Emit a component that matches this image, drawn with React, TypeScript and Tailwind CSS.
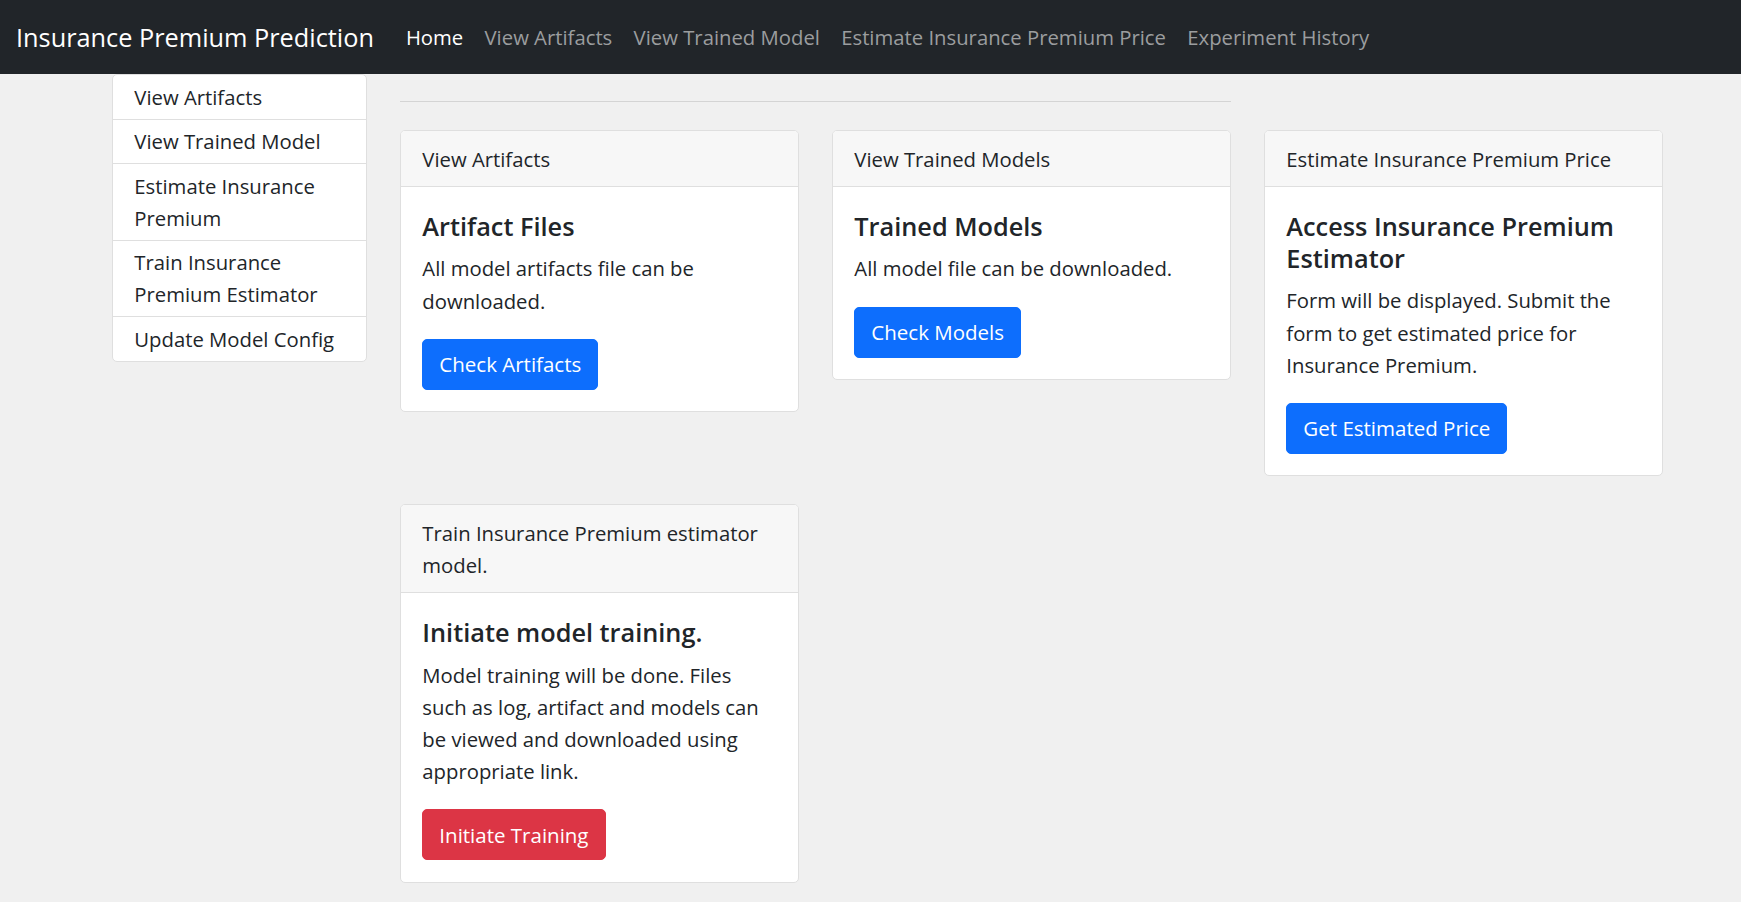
import React from "react";

const navLinks = [
  "Home",
  "View Artifacts",
  "View Trained Model",
  "Estimate Insurance Premium Price",
  "Experiment History",
];

const sideLinks = [
  "View Artifacts",
  "View Trained Model",
  "Estimate Insurance Premium",
  "Train Insurance Premium Estimator",
  "Update Model Config",
];

type CardProps = {
  header: string;
  title: string;
  text: string;
  button: string;
  danger?: boolean;
};

function Card({ header, title, text, button, danger }: CardProps) {
  return (
    <div className="bg-white border border-[#dfdfdf] rounded-[5px] overflow-hidden">
      <div className="bg-[#f7f7f7] border-b border-[#dfdfdf] px-[21.33px] py-[11.6px]">
        {header}
      </div>
      <div className="px-[21.33px] pt-[22.5px] pb-[21.33px]">
        <h5 className="text-[25.3px] leading-[32px] font-semibold mb-[10.67px]">{title}</h5>
        <p className="mb-[22px] leading-[32.2px]">{text}</p>
        <button
          className={
            danger
              ? "bg-[#dc3545] border border-[#dc3545] text-white rounded-[5px] px-[16px] py-[8.5px] leading-[32px] text-[20.5px]"
              : "bg-[#0d6efd] border border-[#0d6efd] text-white rounded-[5px] px-[16px] py-[8.5px] leading-[32px] text-[20.5px]"
          }
        >
          {button}
        </button>
      </div>
    </div>
  );
}

export default function App() {
  return (
    <div className="min-h-screen bg-[#f0f0f0] font-['Open_Sans',sans-serif] text-[#212529] text-[20.3px] leading-[32px]">
      <nav className="h-[74px] bg-[#212529] flex items-center px-[16px]">
        <span className="text-white text-[25.3px] leading-[40px] mr-[21.33px]">
          Insurance Premium Prediction
        </span>
        <ul className="flex">
          {navLinks.map((l, i) => (
            <li
              key={l}
              className={i === 0 ? "px-[10.67px] text-white" : "px-[10.67px] text-[#9b9d9f]"}
            >
              {l}
            </li>
          ))}
        </ul>
      </nav>
      <div className="flex items-start">
        <ul className="ml-[112px] w-[255px] shrink-0 bg-white border border-[#dfdfdf] rounded-[5px]">
          {sideLinks.map((l, i) => (
            <li
              key={l}
              className={
                i === 0
                  ? "px-[21.33px] py-[5.75px]"
                  : i === 4
                  ? "px-[21.33px] py-[5.75px] border-t border-[#dfdfdf] whitespace-nowrap"
                  : "px-[21.33px] py-[5.75px] border-t border-[#dfdfdf]"
              }
            >
              {l}
            </li>
          ))}
        </ul>
        <main className="ml-[33px]">
          <hr className="mt-[27px] w-[831px] border-t border-[#d4d4d4]" />
          <div className="mt-[28px] grid grid-cols-[399px_399px_399px] gap-x-[33px] gap-y-[28px] items-start">
            <Card
              header="View Artifacts"
              title="Artifact Files"
              text="All model artifacts file can be downloaded."
              button="Check Artifacts"
            />
            <Card
              header="View Trained Models"
              title="Trained Models"
              text="All model file can be downloaded."
              button="Check Models"
            />
            <Card
              header="Estimate Insurance Premium Price"
              title="Access Insurance Premium Estimator"
              text="Form will be displayed. Submit the form to get estimated price for Insurance Premium."
              button="Get Estimated Price"
            />
            <Card
              header="Train Insurance Premium estimator model."
              title="Initiate model training."
              text="Model training will be done. Files such as log, artifact and models can be viewed and downloaded using appropriate link."
              button="Initiate Training"
              danger
            />
          </div>
        </main>
      </div>
    </div>
  );
}
